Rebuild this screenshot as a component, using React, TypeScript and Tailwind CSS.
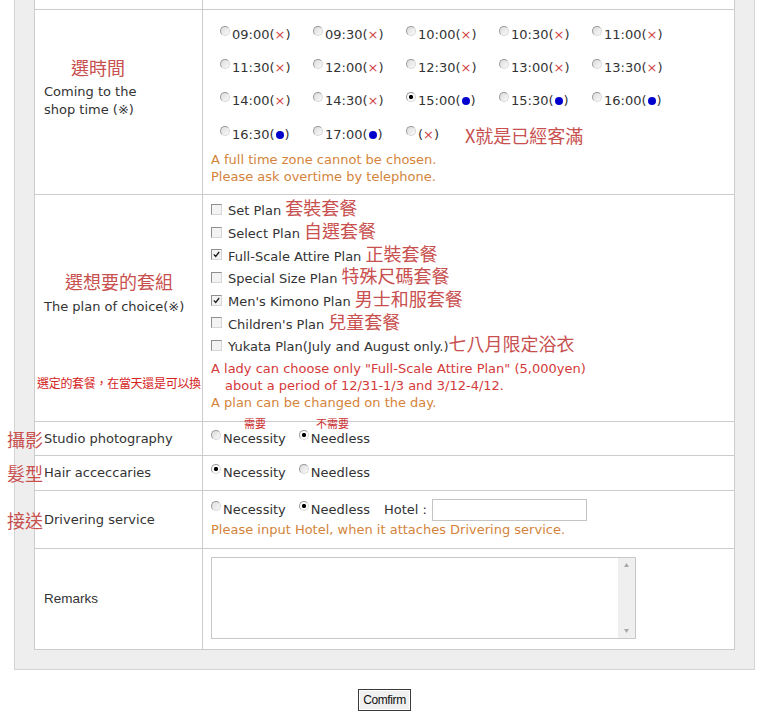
import React from 'react';

const cjk = "font-['Noto_Sans_CJK_TC',sans-serif]";

function Radio({ checked }: { checked?: boolean }) {
  return (
    <span
      className={
        checked
          ? 'inline-block w-[10px] h-[10px] rounded-full border border-[#9a9a9a] border-b-[#d8d8d8] border-r-[#d8d8d8] bg-[radial-gradient(circle,#000_0_1.8px,#fafafa_2.4px)] align-[3px] mr-[2px]'
          : 'inline-block w-[10px] h-[10px] rounded-full border border-[#9a9a9a] border-b-[#d8d8d8] border-r-[#d8d8d8] bg-gradient-to-br from-[#dcdcdc] to-[#fafafa] align-[3px] mr-[2px]'
      }
    />
  );
}

function Check({ checked }: { checked?: boolean }) {
  return (
    <span className="flex items-center justify-center w-[11px] h-[11px] shrink-0 border border-[#8f8f8f] border-b-[#d6d6d6] border-r-[#d6d6d6] bg-[#f3f3f3] mr-[6px]">
      {checked && (
        <svg width="7" height="7" viewBox="0 0 7 7">
          <path d="M0.8 3.4 L2.7 5.4 L6.2 1" stroke="#1a1a1a" strokeWidth="1.3" fill="none" />
        </svg>
      )}
    </span>
  );
}

type Slot = { t: string; open: boolean; checked?: boolean };

const rows: Slot[][] = [
  [
    { t: '09:00', open: false },
    { t: '09:30', open: false },
    { t: '10:00', open: false },
    { t: '10:30', open: false },
    { t: '11:00', open: false },
  ],
  [
    { t: '11:30', open: false },
    { t: '12:00', open: false },
    { t: '12:30', open: false },
    { t: '13:00', open: false },
    { t: '13:30', open: false },
  ],
  [
    { t: '14:00', open: false },
    { t: '14:30', open: false },
    { t: '15:00', open: true, checked: true },
    { t: '15:30', open: true },
    { t: '16:00', open: true },
  ],
];

function SlotLabel({ s }: { s: Slot }) {
  return (
    <span className="w-[93px] whitespace-nowrap">
      <Radio checked={s.checked} />
      {s.t}(
      {s.open ? (
        <span className="mx-[1px] inline-block h-[8px] w-[8px] rounded-full bg-[#0000cc] align-[0px]" />
      ) : (
        <span className="text-[#d04848]">×</span>
      )}
      )
    </span>
  );
}

const plans = [
  { en: 'Set Plan ', zh: '套裝套餐' },
  { en: 'Select Plan ', zh: '自選套餐' },
  { en: 'Full-Scale Attire Plan ', zh: '正裝套餐', checked: true },
  { en: 'Special Size Plan ', zh: '特殊尺碼套餐' },
  { en: "Men's Kimono Plan ", zh: '男士和服套餐', checked: true },
  { en: "Children's Plan ", zh: '兒童套餐' },
  { en: 'Yukata Plan(July and August only.)', zh: '七八月限定浴衣' },
];

export default function App() {
  return (
    <div className="min-h-screen bg-white text-[13px] text-[#333] font-['DejaVu_Sans','Noto_Sans_CJK_TC',sans-serif]">
      <div className="ml-[14px] w-[741px] border-x border-b border-[#d4d4d4] bg-[#eeeeee] px-[19px] pb-[19px]">
        <div className="border-x border-b border-[#cccccc] bg-white">
          {/* row cut off at the top */}
          <div className="flex h-[10px] border-b border-[#cccccc]">
            <div className="w-[168px] border-r border-[#cccccc]" />
            <div className="flex-1" />
          </div>

          {/* shop time */}
          <div className="flex h-[185px] border-b border-[#cccccc]">
            <div className="w-[168px] border-r border-[#cccccc] pl-[9px]">
              <div className={`mt-[45px] pl-[27px] text-[18px] leading-[24px] text-[#c8504f] ${cjk}`}>選時間</div>
              <div className="mt-[4px] leading-[18px]">
                Coming to the
                <br />
                shop time (※)
              </div>
            </div>
            <div className="flex-1 pl-[8px] pt-[8px]">
              <div className="ml-[9px]">
                {rows.map((r, i) => (
                  <div key={i} className="flex h-[33.3px] items-center">
                    {r.map(s => (
                      <SlotLabel key={s.t} s={s} />
                    ))}
                  </div>
                ))}
                <div className="flex h-[33.3px] items-center">
                  <SlotLabel s={{ t: '16:30', open: true }} />
                  <SlotLabel s={{ t: '17:00', open: true }} />
                  <span className="w-[59px] whitespace-nowrap">
                    <Radio />(<span className="text-[#d04848]">×</span>)
                  </span>
                  <span className={`text-[18px] leading-[24px] text-[#c8504f] ${cjk}`}>X就是已經客滿</span>
                </div>
              </div>
              <div className="leading-[17px] text-[#d4843a]">
                A full time zone cannot be chosen.
                <br />
                Please ask overtime by telephone.
              </div>
            </div>
          </div>

          {/* plan */}
          <div className="flex h-[227px] border-b border-[#cccccc]">
            <div className="w-[168px] border-r border-[#cccccc] pl-[9px]">
              <div className={`mt-[74px] pl-[21px] text-[18px] leading-[24px] text-[#c8504f] ${cjk}`}>選想要的套組</div>
              <div className="mt-[5px] leading-[18px]">The plan of choice(※)</div>
              <div className={`mt-[59px] -ml-[7px] whitespace-nowrap text-[12px] leading-[16px] tracking-[-0.3px] text-[#d42222] ${cjk}`}>
                選定的套餐，在當天還是可以換
              </div>
            </div>
            <div className="flex-1 pl-[8px] pt-[3px]">
              {plans.map(p => (
                <div key={p.en} className="flex h-[22.7px] items-center whitespace-nowrap">
                  <Check checked={p.checked} />
                  <span className="leading-[20px]">
                    {p.en}
                    <span className={`text-[18px] leading-[20px] text-[#c8504f] ${cjk}`}>{p.zh}</span>
                  </span>
                </div>
              ))}
              <div className="mt-[3px] leading-[17px] text-[#d43a3a]">
                <div>A lady can choose only "Full-Scale Attire Plan" (5,000yen)</div>
                <div className="pl-[14px]">about a period of 12/31-1/3 and 3/12-4/12.</div>
              </div>
              <div className="leading-[17px] text-[#d4843a]">A plan can be changed on the day.</div>
            </div>
          </div>

          {/* studio */}
          <div className="flex h-[34px] border-b border-[#cccccc]">
            <div className="relative flex w-[168px] items-center border-r border-[#cccccc] pl-[9px]">
              <span className={`absolute left-[-28px] top-1/2 -translate-y-1/2 text-[18px] leading-[24px] text-[#c8504f] ${cjk}`}>攝影</span>
              Studio photography
            </div>
            <div className="relative flex flex-1 items-center pl-[8px]">
              <span className={`absolute left-[41px] top-[-5px] text-[11px] leading-[12px] text-[#cc3333] ${cjk}`}>需要</span>
              <span className={`absolute left-[113px] top-[-5px] text-[11px] leading-[12px] text-[#cc3333] ${cjk}`}>不需要</span>
              <span className="whitespace-nowrap">
                <Radio />
                Necessity
                <span className="inline-block w-[13px]" />
                <Radio checked />
                Needless
              </span>
            </div>
          </div>

          {/* hair */}
          <div className="flex h-[35px] border-b border-[#cccccc]">
            <div className="relative flex w-[168px] items-center border-r border-[#cccccc] pl-[9px]">
              <span className={`absolute left-[-28px] top-1/2 -translate-y-1/2 text-[18px] leading-[24px] text-[#c8504f] ${cjk}`}>髮型</span>
              Hair acceccaries
            </div>
            <div className="flex flex-1 items-center pl-[8px]">
              <span className="whitespace-nowrap">
                <Radio checked />
                Necessity
                <span className="inline-block w-[13px]" />
                <Radio />
                Needless
              </span>
            </div>
          </div>

          {/* driving */}
          <div className="flex h-[58px] border-b border-[#cccccc]">
            <div className="relative flex w-[168px] items-center border-r border-[#cccccc] pl-[9px]">
              <span className={`absolute left-[-28px] top-1/2 -translate-y-1/2 text-[18px] leading-[24px] text-[#c8504f] ${cjk}`}>接送</span>
              Drivering service
            </div>
            <div className="flex-1 pl-[8px] pt-[8px]">
              <div className="flex h-[22px] items-center whitespace-nowrap">
                <span>
                  <Radio />
                  Necessity
                  <span className="inline-block w-[13px]" />
                  <Radio checked />
                  Needless
                </span>
                <span className="ml-[14px]">Hotel :</span>
                <input className="ml-[5px] h-[22px] w-[155px] border border-[#c4c4c4] bg-white px-1 outline-none" />
              </div>
              <div className="leading-[17px] text-[#d4843a]">Please input Hotel, when it attaches Drivering service.</div>
            </div>
          </div>

          {/* remarks */}
          <div className="flex h-[100px]">
            <div className="flex w-[168px] items-center border-r border-[#cccccc] pl-[9px] font-['Liberation_Sans',sans-serif] text-[13.5px]">
              Remarks
            </div>
            <div className="flex-1 pl-[8px] pt-[8px]">
              <div className="flex h-[82px] w-[425px] border border-[#c8c8c8]">
                <textarea className="flex-1 resize-none bg-white p-1 outline-none" />
                <div className="flex w-[17px] flex-col items-center justify-between bg-[#efefef] py-[5px]">
                  <svg width="5" height="4" viewBox="0 0 5 4">
                    <path d="M2.5 0 L5 4 L0 4 Z" fill="#a8a8a8" />
                  </svg>
                  <svg width="5" height="4" viewBox="0 0 5 4">
                    <path d="M0 0 L5 0 L2.5 4 Z" fill="#a8a8a8" />
                  </svg>
                </div>
              </div>
            </div>
          </div>
        </div>
      </div>

      <div className="ml-[14px] mt-[19px] flex w-[741px] justify-center">
        <button className="h-[22px] w-[53px] border border-[#3a3a3a] bg-[#f0f0f0] font-['Liberation_Sans',sans-serif] text-[12px] tracking-[-0.4px] text-[#111] shadow-[inset_0_0_0_1px_#ffffff]">
          Comfirm
        </button>
      </div>
    </div>
  );
}
